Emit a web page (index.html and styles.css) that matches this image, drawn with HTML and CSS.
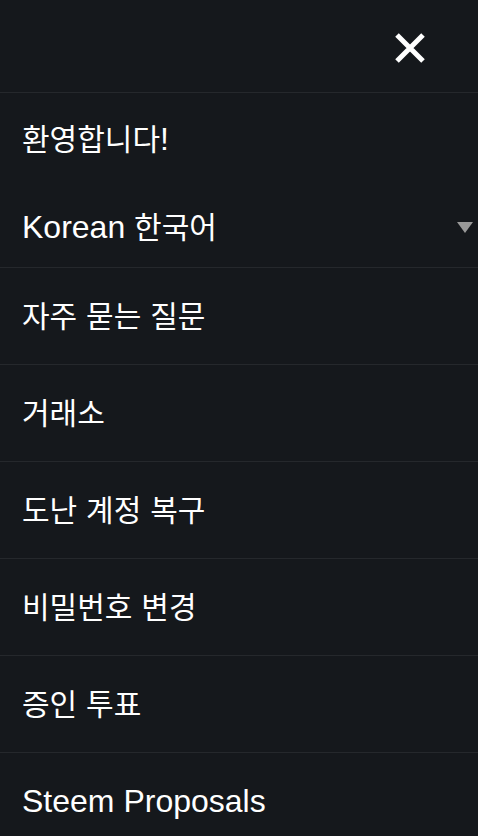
FILE: index.html
```html
<!DOCTYPE html>
<html lang="ko">
<head>
<meta charset="utf-8">
<title>Menu</title>
<link rel="stylesheet" href="styles.css">
</head>
<body>
<nav class="menu">
  <div class="menu-header">
    <button class="close" aria-label="닫기">
      <svg width="32" height="32" viewBox="0 0 32 32"><path d="M3 3 L29 29 M29 3 L3 29" stroke="#fff" stroke-width="5" stroke-linecap="butt"/></svg>
    </button>
  </div>
  <div class="welcome">
    <div class="welcome-text"><span class="ko">환영합니다</span>!</div>
    <div class="lang">
      <span>Korean <span class="ko">한국어</span></span>
      <span class="caret"></span>
    </div>
  </div>
  <ul class="items">
    <li><span class="ko">자주</span> <span class="ko">묻는</span> <span class="ko">질문</span></li>
    <li><span class="ko">거래소</span></li>
    <li><span class="ko">도난</span> <span class="ko">계정</span> <span class="ko">복구</span></li>
    <li><span class="ko">비밀번호</span> <span class="ko">변경</span></li>
    <li><span class="ko">증인</span> <span class="ko">투표</span></li>
    <li>Steem Proposals</li>
  </ul>
</nav>
</body>
</html>
```

FILE: styles.css
```css
html, body {
  margin: 0;
  padding: 0;
  background: #15181c;
  height: 100%;
  overflow: hidden;
}
body {
  font-family: "Liberation Sans", Arial, "Noto Sans CJK KR", sans-serif;
  color: #fff;
  font-size: 32px;
  line-height: 32px;
}
.ko {
  font-family: "Noto Sans CJK KR", sans-serif;
  font-size: 30px;
  line-height: 20px;
}
.menu-header {
  height: 92px;
  border-bottom: 1px solid #25282c;
  display: flex;
  justify-content: flex-end;
  align-items: center;
}
.close {
  background: none;
  border: 0;
  padding: 0;
  margin-right: 52px;
  margin-top: 4px;
  width: 32px;
  height: 32px;
  display: flex;
}
.welcome {
  padding: 30px 5px 24px 22px;
  border-bottom: 1px solid #25282c;
}
.lang {
  margin-top: 56px;
  display: flex;
  justify-content: space-between;
  align-items: center;
}
.caret {
  width: 0;
  height: 0;
  border-left: 8px solid transparent;
  border-right: 8px solid transparent;
  border-top: 11px solid #999;
  margin-top: 1px;
}
.items {
  list-style: none;
  margin: 0;
  padding: 0;
}
.items li {
  padding: 32px 22px;
  border-bottom: 1px solid #25282c;
}
```
